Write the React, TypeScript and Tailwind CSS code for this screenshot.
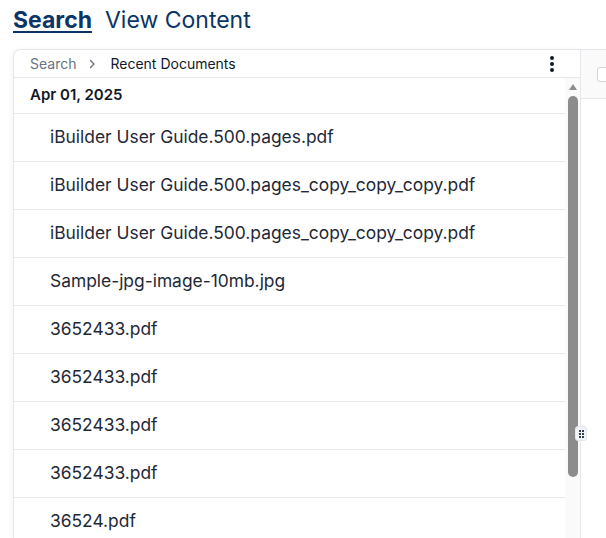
import React from "react";

const files = [
  "iBuilder User Guide.500.pages.pdf",
  "iBuilder User Guide.500.pages_copy_copy_copy.pdf",
  "iBuilder User Guide.500.pages_copy_copy_copy.pdf",
  "Sample-jpg-image-10mb.jpg",
  "3652433.pdf",
  "3652433.pdf",
  "3652433.pdf",
  "3652433.pdf",
  "36524.pdf",
];

export default function App() {
  return (
    <div className="h-[538px] w-[606px] overflow-hidden bg-white font-['Inter',_'Noto_Sans',_sans-serif]">
      {/* tabs */}
      <div className="flex h-[49px] items-start gap-[13px] px-[13px] pt-[6px]">
        <span className="text-[23px] font-bold leading-[28px] text-[#0b3566] underline decoration-2 underline-offset-[3px]">
          Search
        </span>
        <span className="text-[23px] leading-[28px] text-[#0b3566]">View Content</span>
      </div>

      <div className="flex pl-[13px]">
        {/* left panel */}
        <div className="flex h-[489px] w-[568px] shrink-0 flex-col rounded-tl-lg border-l border-t border-r border-[#e5e7eb] shadow-[-2px_0_4px_rgba(0,0,0,0.04)]">
          <div className="flex h-[28px] shrink-0 items-center border-b border-[#e5e7eb] pl-4 pr-4 text-[14px]">
            <span className="text-[#6b7280]">Search</span>
            <svg className="ml-[10px] mr-[12px] h-3 w-3 text-[#6b7280]" viewBox="0 0 12 12" fill="none">
              <path d="M4.5 2.5 8 6l-3.5 3.5" stroke="currentColor" strokeWidth="1.4" strokeLinecap="round" strokeLinejoin="round" />
            </svg>
            <span className="text-[#111827]">Recent Documents</span>
            <div className="ml-auto mr-[10px] flex flex-col gap-[2px]">
              <span className="h-[4px] w-[4px] rounded-full bg-[#111827]" />
              <span className="h-[4px] w-[4px] rounded-full bg-[#111827]" />
              <span className="h-[4px] w-[4px] rounded-full bg-[#111827]" />
            </div>
          </div>

          <div className="flex min-h-0 flex-1">
            <div className="min-w-0 flex-1 overflow-hidden">
              <div className="flex h-[36px] items-center border-b border-[#e5e7eb] pl-4 text-[15px] font-semibold text-[#111827]">
                Apr 01, 2025
              </div>
              {files.map((f, i) => (
                <div
                  key={i}
                  className="flex h-[48px] items-center border-b border-[#e5e7eb] pl-9 text-[17.4px] text-[#1f2937]"
                >
                  {f}
                </div>
              ))}
            </div>
            {/* scrollbar */}
            <div className="flex w-[15px] shrink-0 flex-col items-center bg-[#fafafa] pt-[6px]">
              <div className="h-0 w-0 border-x-[4.5px] border-b-[6px] border-x-transparent border-b-[#8c8c8c]" />
              <div className="mt-[6px] h-[381px] w-[10px] rounded-full bg-[#8c8c8c]" />
            </div>
          </div>
        </div>

        {/* right panel */}
        <div className="relative min-w-0 flex-1 border-t border-[#e5e7eb]">
          <div className="flex h-[49px] items-center overflow-hidden border-b border-[#e5e7eb] bg-[#fafafa] pl-4">
            <div className="h-[15px] w-[15px] shrink-0 rounded-[3px] border border-[#d1d5db] bg-white" />
          </div>
          {/* resize handle */}
          <div className="absolute left-[-6px] top-[376px] flex h-[15px] w-[12px] flex-col items-center justify-center gap-[1px] rounded-[3px] border border-[#e5e7eb] bg-[#f3f4f6]">
            <div className="flex gap-[1px]"><span className="h-[2px] w-[2px] bg-[#374151]" /><span className="h-[2px] w-[2px] bg-[#374151]" /></div>
            <div className="flex gap-[1px]"><span className="h-[2px] w-[2px] bg-[#374151]" /><span className="h-[2px] w-[2px] bg-[#374151]" /></div>
            <div className="flex gap-[1px]"><span className="h-[2px] w-[2px] bg-[#374151]" /><span className="h-[2px] w-[2px] bg-[#374151]" /></div>
          </div>
        </div>
      </div>
    </div>
  );
}
